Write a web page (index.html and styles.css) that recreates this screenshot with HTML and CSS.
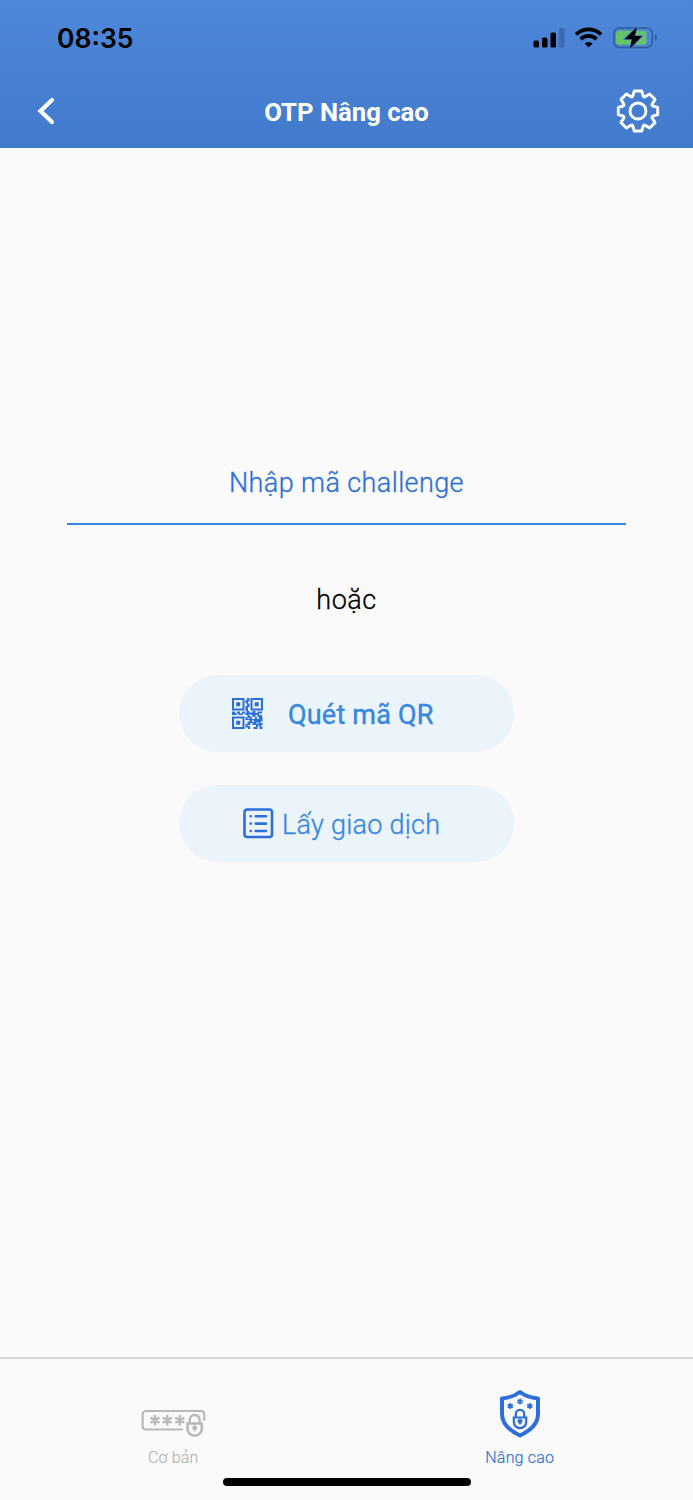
FILE: index.html
```html
<!DOCTYPE html>
<html lang="vi">
<head>
    <meta charset="UTF-8">
    <meta name="viewport" content="width=device-width, initial-scale=1.0">
    <title>OTP Nâng cao</title>
    <link rel="stylesheet" href="styles.css">
</head>
<body>
    <header class="header">
        <div class="status-bar">
            <span class="time">08:35</span>
            <svg class="status-icons" width="126" height="24" viewBox="0 0 126 24">
                <!-- Sóng di động -->
                <rect x="0.500" y="14.500" width="5.500" height="7" rx="1.500"/>
                <rect x="9" y="11.500" width="5.500" height="10" rx="1.500"/>
                <rect x="17.500" y="6.500" width="5.500" height="15" rx="1.500"/>
                <rect x="26" y="2" width="5.500" height="19.500" rx="1.500" fill="#3c69aa"/>
                <!-- Wifi -->
                <g fill="none" stroke="#000" stroke-width="3.800">
                    <path d="M43 8.500a18 18 0 0 1 25.200 0"/>
                    <path d="M47.600 13.200a11.500 11.500 0 0 1 16 0"/>
                </g>
                <path d="M55.600 21.500l-4-4a5.800 5.800 0 0 1 8 0z"/>
                <!-- Pin -->
                <rect x="80.800" y="2" width="38.500" height="19.500" rx="5.500" fill="none" stroke="#315b98" stroke-width="1.500"/>
                <path d="M122 8.500q2 1 2 3.200t-2 3.200z" fill="#315b98"/>
                <rect x="83" y="4.800" width="30.500" height="14" rx="3" fill="#65c466"/>
                <path d="M104 1L91.500 13.200h7.500L97 22.800 109 10h-7.300z" stroke="#4a82d4" stroke-width="1.800" paint-order="stroke"/>
            </svg>
        </div>
        <div class="nav-bar">
            <svg class="back" width="20" height="30" viewBox="0 0 20 30">
                <path d="M16 4L4.500 15 16 26" fill="none" stroke="#fff" stroke-width="4.200" stroke-linecap="round" stroke-linejoin="miter"/>
            </svg>
            <h1 class="title">OTP Nâng cao</h1>
            <svg class="settings" width="44" height="44" viewBox="-22 -22 44 44">
                <g fill="none" stroke="#fff" stroke-width="2.900" stroke-linejoin="round">
                    <path d="M-5.200-15L-3.700-20H3.700L5.200-15Q5.800-13.500 7-14.200L11.600-17 17-11.600 14.200-7Q13.500-5.800 15-5L19.700-3.700V3.700L15 5Q13.500 5.800 14.200 7L17 11.600 11.600 17 7 14.200Q5.800 13.500 5.200 15L3.700 20H-3.700L-5.200 15Q-5.800 13.500-7 14.200L-11.600 17-17 11.600-14.200 7Q-13.500 5.800-15 5L-19.700 3.700V-3.700L-15-5Q-13.500-5.800-14.200-7L-17-11.600-11.600-17-7-14.200Q-5.800-13.500-5.200-15z"/>
                    <circle r="8"/>
                </g>
            </svg>
        </div>
    </header>

    <main class="content">
        <div class="challenge"><span>Nhập mã challenge</span></div>
        <p class="or">hoặc</p>
        <button class="btn btn-qr">
            <svg width="31" height="31" viewBox="0 0 31 31">
                <g fill="none" stroke="#2c6fdb" stroke-width="2">
                    <rect x="1" y="1" width="10.500" height="10.500"/>
                    <rect x="19.500" y="1" width="10.500" height="10.500"/>
                    <rect x="1" y="19.500" width="10.500" height="10.500"/>
                </g>
                <g fill="#2c6fdb">
                    <path d="M4.200 4.200h4v4h-4zM22.700 4.200h4v4h-4zM4.200 22.700h4v4h-4z"/>
                    <path d="M15 0h2.500v3.500h-1.500v2h-2.500v-3.500h1.500zM15 5.500h2.500v3.500h-1.500v4h-2.500v-5h1.500z"/>
                    <path d="M0 13.500h3v1.500h2v-1.500h3v2h2v-2h3v1.500h1.500v-2h3v1.500h3v-1.500h3v2h2v-1.500h4.500v2h-3v1.500h3v2h-4.500v-2h-2v2h-3v-2h-2v3h-3v-3h-2v-1.500h-2.500v1.500H6.500v-1.500H4.500v1.500H0v-2h1.500V15H0z"/>
                    <path d="M13.500 19h2v2h2v-2h2.500v2h3v-2h2v2h2v-2h3.500v4.500h-2v1.500h2v2h-1.500v1.500h1.500V31h-3v-2h-2v2h-4v-2h2v-2h-3v-2h-2v2h-3v-3.500h2v-1.500h-4zM13.500 26h2v2h2.500v3h-2v-1.500h-2.500z"/>
                </g>
                <path d="M20 22.500h2v1.500h-2zM24.500 24.500h2v1.500h-2zM22.500 27h1.500v1.500h-1.500zM17 16h1.500v1.500h-1.500zM26 27.500h1.500v1.200h-1.500z" fill="#ebf3fb"/>
            </svg>
            <span>Quét mã QR</span>
        </button>
        <button class="btn btn-list">
            <svg width="31" height="31" viewBox="0 0 31 31">
                <g fill="none" stroke="#2c6fdb" stroke-width="2.600" stroke-linecap="round">
                    <rect x="1.500" y="1.500" width="27.500" height="27.500" rx="2.500"/>
                    <path d="M12.700 8.200H23M12.700 15.600H23M12.700 23H23M7.700 8.200h.1M7.700 15.600h.1M7.700 23h.1"/>
                </g>
            </svg>
            <span>Lấy giao dịch</span>
        </button>
    </main>

    <footer class="tab-bar">
        <div class="tab">
            <svg width="66" height="50" viewBox="0 0 66 50">
                <g fill="none" stroke="#b9b9b9" stroke-width="2.200" stroke-linecap="round">
                    <path d="M42 40.500H6.500Q2.600 40.500 2.600 37V25.500Q2.600 22 6.500 22H61Q64.300 22 64.300 25.500V31"/>
                    <path stroke-width="2.600" d="M47.500 34.500h14.300v5a7.150 7.150 0 0 1-14.300 0z"/>
                    <path stroke-width="2.400" d="M49.700 34V31a5 5 0 0 1 10 0v3"/>
                    <path stroke-linecap="butt" stroke-width="2.400" d="M15 26v10.400M10.500 28.600l9 5.200M10.500 33.800l9-5.200M27.300 26v10.400M22.800 28.600l9 5.200M22.800 33.800l9-5.200M39.800 26v10.400M35.300 28.600l9 5.200M35.300 33.800l9-5.200"/>
                </g>
                <path d="M54.700 42.500l-2.200-2.800a2.400 2.400 0 1 1 4.400 0z" fill="#b9b9b9"/>
            </svg>
            <span>Cơ bản</span>
        </div>
        <div class="tab active">
            <svg width="44" height="50" viewBox="0 0 44 50">
                <g fill="none" stroke="#2c6fdb">
                    <path stroke-width="4" stroke-linejoin="round" d="M22 3Q15 8.500 4 9.500V25Q4 38 22 46.500 40 38 40 25V9.500Q29 8.500 22 3z"/>
                    <path stroke-width="2.200" d="M15.800 28.500h12.400v4.500a6.200 6.200 0 0 1-12.400 0zM17.800 28.500v-3.500a4.200 4.200 0 0 1 8.400 0v3.500"/>
                    <path stroke-width="1.700" d="M22 9.500v6M19.400 11l5.200 3M19.400 14l5.200-3M12.300 14v6M9.700 15.500l5.200 3M9.700 18.500l5.200-3M31.800 14v6M29.200 15.500l5.200 3M29.200 18.500l5.200-3"/>
                </g>
                <path d="M22 36l-2.400-3a2.500 2.500 0 1 1 4.800 0z" fill="#2c6fdb"/>
            </svg>
            <span>Nâng cao</span>
        </div>
        <div class="home-indicator"></div>
    </footer>
</body>
</html>
```
FILE: styles.css
```css
* {
    box-sizing: border-box;
}
body {
    margin: 0;
    height: 1500px;
    display: flex;
    flex-direction: column;
    font-family: Roboto, sans-serif;
    background-color: #fafafa;
    overflow: hidden;
}
svg {
    display: block;
    flex-shrink: 0;
}
.header {
    height: 148px;
    background: linear-gradient(#4e88da, #427acc);
}
.status-bar {
    height: 76px;
    display: flex;
    justify-content: space-between;
    align-items: center;
    padding: 0 34px 0 57px;
}
.time {
    font-family: Inter, sans-serif;
    font-size: 26.5px;
    font-weight: 600;
    color: #000;
}
.nav-bar {
    height: 70px;
    display: grid;
    grid-template-columns: 44px 1fr 44px;
    align-items: center;
    padding: 0 33px;
}
.title {
    margin: 0;
    text-align: center;
    font-size: 25.7px;
    font-weight: 700;
    line-height: 30px;
    padding-top: 1px;
    color: #fff;
}
.back {
    margin-left: 3px;
}
.content {
    flex: 1;
    display: flex;
    flex-direction: column;
    align-items: center;
    padding-top: 315px;
}
.challenge {
    width: 559px;
    height: 62px;
    padding-top: 3px;
    border-bottom: 2px solid #3687e0;
    text-align: center;
    font-size: 27px;
    font-weight: 300;
    line-height: 34px;
    letter-spacing: 0.4px;
    color: #2c6fdb;
    -webkit-text-stroke: 0.3px;
}
.or {
    margin: 58px 0 0;
    height: 34px;
    font-size: 27px;
    font-weight: 300;
    line-height: 34px;
    letter-spacing: 0.5px;
    color: #000;
    -webkit-text-stroke: 0.3px;
}
.btn {
    width: 335px;
    height: 77px;
    display: flex;
    align-items: center;
    border: none;
    border-radius: 39px;
    background-color: #ebf3fb;
    font-family: inherit;
    font-size: 27px;
    line-height: 34px;
    color: #3687e0;
}
.btn span {
    padding-top: 3px;
    white-space: nowrap;
}
.btn-qr {
    margin-top: 58px;
    padding: 0 0 0 53px;
    gap: 25px;
    font-weight: 400;
    letter-spacing: 0.2px;
    -webkit-text-stroke: 0.4px;
}
.btn-list {
    margin-top: 33px;
    padding: 0 0 0 64px;
    gap: 8px;
    font-weight: 300;
    letter-spacing: 0.25px;
    -webkit-text-stroke: 0.3px;
}
.tab-bar {
    height: 143px;
    display: grid;
    grid-template-columns: 1fr 1fr;
    grid-template-rows: 1fr 22px;
    border-top: 2px solid #d9d9d9;
}
.tab {
    display: flex;
    flex-direction: column;
    align-items: center;
    padding-top: 30px;
    gap: 8px;
    font-size: 16px;
    font-weight: 300;
    line-height: 21px;
    letter-spacing: 0.2px;
    color: #b3b3b3;
    -webkit-text-stroke: 0.15px;
}
.active {
    color: #2c6fdb;
}
.home-indicator {
    grid-column: 1 / 3;
    justify-self: center;
    width: 248px;
    height: 8px;
    border-radius: 4px;
    background-color: #000;
}
```
